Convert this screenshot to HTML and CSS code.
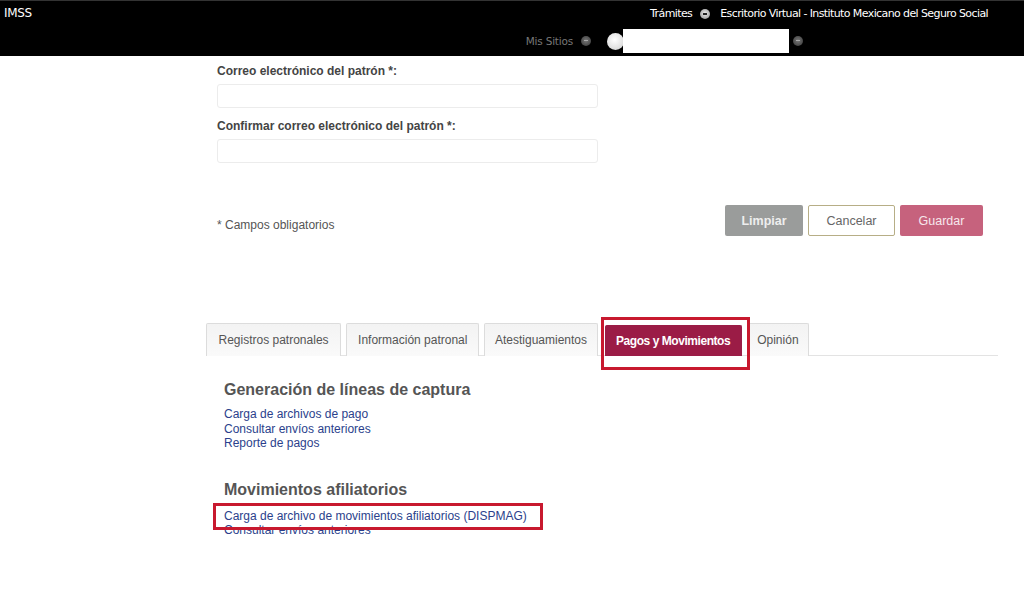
FILE: index.html
```html
<!DOCTYPE html>
<html lang="es">
<head>
<meta charset="utf-8">
<title>IMSS - Escritorio Virtual</title>
<link rel="stylesheet" href="styles.css">
</head>
<body>
<header class="topbar">
  <div class="row row-top">
    <span class="brand">IMSS</span>
    <nav class="topnav">
      <span class="nav-item">Trámites</span>
      <span class="dd dd-light"></span>
      <span class="nav-item">Escritorio Virtual - Instituto Mexicano del Seguro Social</span>
    </nav>
  </div>
  <div class="row row-bottom">
    <span class="sites">Mis Sitios</span>
    <span class="dd dd-dim"></span>
    <span class="avatar"></span>
    <span class="userbox"></span>
    <span class="dd dd-dim"></span>
  </div>
</header>

<main class="page">
  <section class="form">
    <label class="label">Correo electrónico del patrón *:</label>
    <div class="input"></div>
    <label class="label">Confirmar correo electrónico del patrón *:</label>
    <div class="input"></div>

    <div class="actions">
      <span class="required">* Campos obligatorios</span>
      <div class="buttons">
        <button class="btn btn-grey">Limpiar</button>
        <button class="btn btn-outline">Cancelar</button>
        <button class="btn btn-pink">Guardar</button>
      </div>
    </div>
  </section>

  <section class="tabs-area">
    <ul class="tabs">
      <li class="tab tab-wide">Registros patronales</li>
      <li class="tab tab-wide">Información patronal</li>
      <li class="tab">Atestiguamientos</li>
      <li class="tab tab-active">Pagos y Movimientos</li>
      <li class="tab">Opinión</li>
    </ul>

    <div class="panel">
      <h2 class="heading">Generación de líneas de captura</h2>
      <ul class="links">
        <li><a href="#">Carga de archivos de pago</a></li>
        <li><a href="#">Consultar envíos anteriores</a></li>
        <li><a href="#">Reporte de pagos</a></li>
      </ul>

      <h2 class="heading heading-second">Movimientos afiliatorios</h2>
      <ul class="links">
        <li><a href="#" class="marked">Carga de archivo de movimientos afiliatorios (DISPMAG)</a></li>
        <li><a href="#">Consultar envíos anteriores</a></li>
      </ul>
    </div>
  </section>
</main>
</body>
</html>
```

FILE: styles.css
```css
* { box-sizing: border-box; }

html, body {
  margin: 0;
  padding: 0;
  background: #ffffff;
}

body {
  font-family: "Liberation Sans", Arial, sans-serif;
  font-size: 12px;
  color: #444;
  width: 1024px;
  height: 616px;
  overflow: hidden;
}

/* ---------- header ---------- */
.topbar {
  background: #000;
  height: 56px;
  border-top: 1px solid #333;
  font-family: "DejaVu Sans", Tahoma, sans-serif;
}

.row {
  display: flex;
  align-items: center;
}

.row-top {
  height: 26px;
  padding: 0 36px 0 4px;
  justify-content: space-between;
}

.brand {
  color: #fff;
  font-size: 12px;
  letter-spacing: -0.3px;
  margin-top: -2px;
}

.topnav {
  display: flex;
  align-items: center;
  gap: 6px;
}

.nav-item {
  color: #fff;
  font-size: 11px;
  letter-spacing: -0.6px;
  margin-top: -2px;
}

.dd {
  display: inline-block;
  width: 10px;
  height: 10px;
  border-radius: 50%;
  position: relative;
}

.dd::after {
  content: "";
  position: absolute;
  left: 3px;
  top: 4px;
  width: 4px;
  height: 2px;
  background: #222;
}

.dd-light {
  background: radial-gradient(circle at 50% 45%, #eee, #888);
  margin: 0 4px 0 2px;
}

.dd-dim {
  background: radial-gradient(circle at 50% 45%, #777, #333);
}

.dd-dim::after { background: #aaa; height: 1px; }

.row-bottom {
  height: 28px;
  justify-content: flex-end;
  padding-right: 221px;
  gap: 0;
}

.sites {
  color: #777;
  font-size: 10.5px;
  letter-spacing: -0.2px;
  margin-right: 8px;
}

.row-bottom .dd-dim:nth-of-type(2) { margin-right: 16px; }

.avatar {
  width: 17px;
  height: 17px;
  border-radius: 50%;
  background: radial-gradient(circle at 45% 40%, #fff, #cfcfcf);
  margin-right: -1px;
}

.userbox {
  width: 166px;
  height: 24px;
  background: #fff;
  margin-right: 4px;
}

/* ---------- main ---------- */
.page {
  padding-left: 206px;
  width: 1000px;
}

.form {
  padding-left: 11px;
  padding-top: 8px;
}

.label {
  display: block;
  font-weight: bold;
  font-size: 12px;
  line-height: 14px;
  color: #444;
}

.input {
  width: 381px;
  height: 24px;
  margin: 6px 0 11px;
  border: 1px solid #ececec;
  border-radius: 3px;
  background: #fff;
}

.actions {
  display: flex;
  justify-content: space-between;
  align-items: center;
  margin-top: 42px;
  width: 766px;
}

.required {
  font-size: 12px;
  color: #555;
  margin-top: 8px;
}

.buttons {
  display: flex;
  gap: 5px;
}

.btn {
  font-family: "Liberation Sans", Arial, sans-serif;
  font-size: 12.5px;
  height: 31px;
  border-radius: 2px;
  border: 1px solid transparent;
  cursor: pointer;
}

.btn-grey {
  width: 78px;
  background: #9a9c9b;
  color: #eeeeee;
  font-weight: bold;
}

.btn-outline {
  width: 87px;
  background: #fff;
  border: 1px solid #b7ae86;
  color: #666;
}

.btn-pink {
  width: 83px;
  background: #c6627d;
  color: #f7e7ec;
}

/* ---------- tabs ---------- */
.tabs-area {
  margin-top: 87px;
}

.tabs {
  list-style: none;
  margin: 0;
  padding: 0;
  display: flex;
  gap: 5px;
  border-bottom: 1px solid #e3e3e3;
  width: 792px;
  height: 33px;
}

.tab {
  height: 33px;
  padding: 0 9.5px;
  display: flex;
  align-items: center;
  font-size: 12px;
  color: #555;
  background: linear-gradient(#f3f3f3, #fafafa);
  border: 1px solid #dcdcdc;
  border-bottom: none;
  border-radius: 2px 2px 0 0;
}

.tab-wide { padding: 0 11px; }
.tab-wide:first-child { padding: 0 11.5px; }

.tab-active {
  position: relative;
  background: #9b1c46;
  color: #fff;
  border-color: #9b1c46;
  font-size: 12px;
  font-weight: bold;
  letter-spacing: -0.45px;
  margin: 2px 0 0 2px;
  height: 31px;
  padding: 0 10.5px;
}

.tab-active::after {
  content: "";
  position: absolute;
  left: -5px;
  right: -9px;
  top: -9px;
  bottom: -14px;
  border: 3px solid #c8192f;
}

/* ---------- panel ---------- */
.panel {
  padding: 24px 0 0 18px;
}

.heading {
  margin: 0;
  font-size: 16px;
  line-height: 20px;
  font-weight: bold;
  color: #555;
}

.heading-second {
  margin-top: 29px;
}

.links {
  list-style: none;
  margin: 7px 0 0;
  padding: 0;
}

.heading-second + .links {
  margin-top: 9px;
}

.links li {
  line-height: 14.5px;
  font-size: 12px;
}

.links a {
  color: #2b3f8c;
  text-decoration: none;
}

.marked {
  position: relative;
}

.marked::after {
  content: "";
  position: absolute;
  left: -11px;
  right: -16px;
  top: -6px;
  bottom: -7px;
  border: 3px solid #c8192f;
}
```
